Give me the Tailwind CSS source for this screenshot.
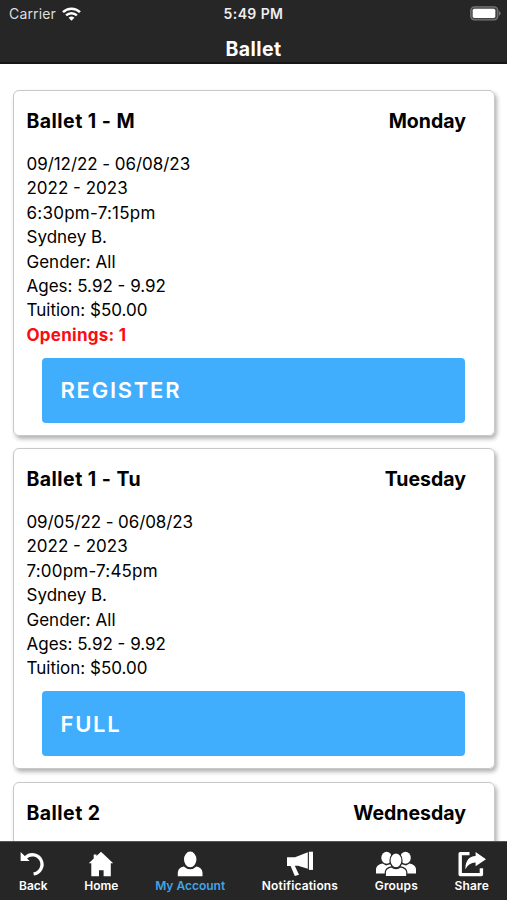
<!DOCTYPE html>
<html lang="en">
  <head>
    <meta charset="UTF-8" />
    <meta name="viewport" content="width=device-width, initial-scale=1.0"/>
    <title>Ballet</title>
    <!-- Tailwind via CDN -->
    <script src="https://cdn.jsdelivr.net/npm/@tailwindcss/browser@4"></script>
  </head>
  <body class="h-[900px] overflow-hidden flex flex-col bg-white text-black font-['Inter',sans-serif]">

    <!-- Header -->
    <header class="h-16 shrink-0 bg-[#262626] border-b-2 border-[#171717] text-white">
      <div class="h-[27px] grid grid-cols-3 items-center pl-[9px] pr-[6px]">
        <div class="flex items-center gap-[6px] text-[14px] tracking-[0.15px] text-[#dedede]">
          <span>Carrier</span>
          <svg class="w-[19px] h-[14px]" viewBox="0 0 19 14" fill="none" stroke="#fff" stroke-width="2.5">
            <path d="M1 5.2a12.2 12.2 0 0 1 17 0" />
            <path d="M4.1 8.4a7.8 7.8 0 0 1 10.8 0" />
            <path d="M9.5 13.8 6.6 10.8a4.2 4.2 0 0 1 5.8 0z" fill="#fff" stroke="none" />
          </svg>
        </div>
        <div class="-ml-[3px] text-center text-[14px] tracking-[0.4px] font-semibold text-[#eee] whitespace-nowrap">5:49 PM</div>
        <svg class="w-[31px] h-[15px] justify-self-end" viewBox="0 0 31 15">
          <rect x="0.8" y="0.8" width="27" height="13" rx="3.8" fill="#444" stroke="#777" stroke-width="1.3" />
          <rect x="2.7" y="2.7" width="22.6" height="9.2" rx="1.6" fill="#fff" />
          <path d="M29 5v4.8q1.6-1 1.6-2.4T29 5z" fill="#777" />
        </svg>
      </div>
      <h1 class="pt-2 text-center text-[19.5px] leading-[28px] tracking-[0.4px] font-bold">Ballet</h1>
    </header>

    <!-- Class List -->
    <main class="flex-1 min-h-0 overflow-hidden pt-[26px] pl-[13px] pr-[12px] flex flex-col gap-[12.5px]">
      <section class="shrink-0 h-[345.5px] border-[1.5px] border-[#c8c8c8] rounded-md shadow-[2px_3px_4px_rgba(0,0,0,0.3)] pt-[18px] pl-[12.5px] pr-[28px]">
        <div class="flex justify-between text-[19.5px] leading-6 font-bold">
          <h2 class="tracking-[0.45px]">Ballet 1 - M</h2>
          <span>Monday</span>
        </div>
        <div class="mt-[19px] text-[17px] leading-[24.4px]">
          <p class="-tracking-[0.05px]">09/12/22 - 06/08/23</p>
          <p>2022 - 2023</p>
          <p class="tracking-[0.25px]">6:30pm-7:15pm</p>
          <p>Sydney B.</p>
          <p>Gender: All</p>
          <p>Ages: 5.92 - 9.92</p>
          <p>Tuition: $50.00</p>
          <p class="font-bold tracking-[0.25px] text-[#fa0c10]">Openings: 1</p>
        </div>
        <button class="block mt-[10.5px] ml-[15px] w-[423.5px] h-[65px] pt-px pl-[19px] rounded bg-[#40aefc] text-left text-white text-[22px] font-semibold tracking-[1.75px]">REGISTER</button>
      </section>

      <section class="shrink-0 h-[321px] border-[1.5px] border-[#c8c8c8] rounded-md shadow-[2px_3px_4px_rgba(0,0,0,0.3)] pt-[18px] pl-[12.5px] pr-[28px]">
        <div class="flex justify-between text-[19.5px] leading-6 font-bold">
          <h2 class="tracking-[0.45px]">Ballet 1 - Tu</h2>
          <span>Tuesday</span>
        </div>
        <div class="mt-[19px] text-[17px] leading-[24.4px]">
          <p class="-tracking-[0.1px]">09/05/22 - 06/08/23</p>
          <p>2022 - 2023</p>
          <p class="tracking-[0.2px]">7:00pm-7:45pm</p>
          <p>Sydney B.</p>
          <p>Gender: All</p>
          <p>Ages: 5.92 - 9.92</p>
          <p>Tuition: $50.00</p>
        </div>
        <button class="block mt-[10.5px] ml-[15px] w-[423.5px] h-[65px] pt-px pl-[19px] rounded bg-[#40aefc] text-left text-white text-[22px] font-semibold tracking-[1.75px]">FULL</button>
      </section>

      <section class="shrink-0 h-[321px] border-[1.5px] border-[#c8c8c8] rounded-md shadow-[2px_3px_4px_rgba(0,0,0,0.3)] pt-[18px] pl-[12.5px] pr-[28px]">
        <div class="flex justify-between text-[19.5px] leading-6 font-bold">
          <h2 class="tracking-[0.45px]">Ballet 2</h2>
          <span>Wednesday</span>
        </div>
      </section>
    </main>

    <!-- Tab Bar -->
    <nav class="h-[59px] shrink-0 bg-[#262626] border-t border-[#555] pt-[9px] pl-[19px] pr-[18px] flex justify-between items-start text-white text-[12px] leading-4 font-semibold">
      <a class="flex flex-col items-center gap-px">
        <svg class="w-[26px] h-[26px]" viewBox="0 0 26 26">
          <path d="M5.6 6.6A9.6 9.6 0 1 1 13.6 22.9" fill="none" stroke="#fff" stroke-width="3.3" />
          <path d="M.6 1V10H9.600L7.400 7.700 4 4.300z" fill="#fff" />
        </svg>
        <span>Back</span>
      </a>
      <a class="flex flex-col items-center gap-px">
        <svg class="w-[26px] h-[26px]" viewBox="0 0 26 26" fill="#fff">
          <path d="M13 .8 25.200 12.200H22.800V25.300H15.600V19.300H11V25.300H3.300V12.200H.8L5.700 7.600V3.400H8.500V5z" />
        </svg>
        <span>Home</span>
      </a>
      <a class="flex flex-col items-center gap-px text-[#42a4e8]">
        <svg class="w-[26px] h-[26px]" viewBox="0 0 26 26" fill="#fff">
          <ellipse cx="13.2" cy="8.4" rx="6.2" ry="7.800" />
          <path d="M.8 25.300V21.500Q1.200 16.700 6.800 15.600 9.700 18.300 13.200 18.300T19.400 15.600Q25 16.700 25.500 21.500V25.300z" />
        </svg>
        <span>My Account</span>
      </a>
      <a class="flex flex-col items-center gap-px tracking-[0.15px]">
        <svg class="w-[28px] h-[26px]" viewBox="0 0 28 26" fill="#fff">
          <path d="M1 6.200H9L21.800 1.200V17.800L12 14.800H8.800L13 23.800 8.800 25.100 4.600 15H1z" />
          <path d="M22.900.7H27V18.900H22.900z" />
        </svg>
        <span>Notifications</span>
      </a>
      <a class="flex flex-col items-center gap-px tracking-[0.15px]">
        <svg class="w-[40px] h-[26px]" viewBox="0 0 40 26" fill="#fff">
          <ellipse cx="10.600" cy="6.800" rx="5.300" ry="6" />
          <ellipse cx="29.500" cy="6.800" rx="5.300" ry="6" />
          <path d="M0 22.500V18Q.5 13.500 6.500 12.400L10 14.500 15 13 16 22.500zM40 22.500V18Q39.500 13.500 33.600 12.400L30 14.500 25 13 24 22.500z" />
          <g stroke="#262626" stroke-width="1.200">
            <path d="M9.300 25.600V21Q9.700 17 15.400 15.800 17.500 17.600 20 17.600T24.700 15.800Q30.400 17 30.800 21V25.600z" />
            <ellipse cx="20" cy="9.400" rx="6" ry="7.400" />
          </g>
        </svg>
        <span>Groups</span>
      </a>
      <a class="flex flex-col items-center gap-px tracking-[0.15px]">
        <svg class="w-[30px] h-[26px]" viewBox="0 0 30 26">
          <path d="M12.500 2.600H3.200V23.600H24.400V17.300" fill="none" stroke="#fff" stroke-width="3.400" stroke-linejoin="round" />
          <path d="M18.600 1 29 8.300 18.600 15.300V11.500Q12 11.400 8.300 18.200 8.500 5.500 18.600 5z" fill="#fff" />
        </svg>
        <span>Share</span>
      </a>
    </nav>
  </body>
</html>
